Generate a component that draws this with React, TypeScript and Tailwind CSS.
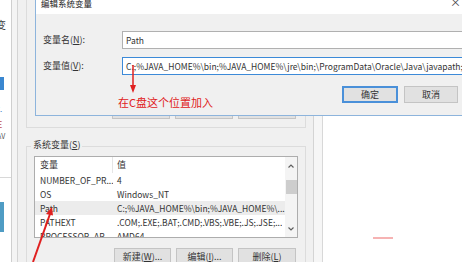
import React from "react";

const rows = [
  { name: "NUMBER_OF_PR...", value: "4" },
  { name: "OS", value: "Windows_NT" },
  { name: "Path", value: "C:;%JAVA_HOME%\\bin;%JAVA_HOME%\\...", sel: true },
  { name: "PATHEXT", value: ".COM;.EXE;.BAT;.CMD;.VBS;.VBE;.JS;.JSE;..." },
  { name: "PROCESSOR_AR...", value: "AMD64" },
];

function Btn({ children, primary }: { children: React.ReactNode; primary?: boolean }) {
  return (
    <div
      className={
        "w-full h-full flex items-center justify-center bg-[#e1e1e1] text-[9px] text-[#333] " +
        (primary ? "border-2 border-[#4a90d9]" : "border border-[#c4c4c4]")
      }
    >
      {children}
    </div>
  );
}

export default function App() {
  return (
    <div className="relative w-[462px] h-[262px] overflow-hidden bg-white font-['Noto_Sans_CJK_SC','Noto_Sans',sans-serif] text-[#333]">
      {/* far-left window fragment */}
      <div className="absolute left-0 top-0 w-[12px] h-[262px] bg-white border-r border-[#cfcfcf] flex flex-col overflow-hidden">
        <div className="mt-[19px] -ml-[4px] text-[10px] leading-[12px] text-[#444]">变</div>
        <div className="mt-[46px] w-[4px] h-[13px] bg-[#3a87d0]" />
        <div className="mt-[14px] -ml-[3px] text-[8px] leading-[10px] text-[#3a7bc8]">t.</div>
        <div className="mt-[6px] -ml-[3px] text-[9px] leading-[10px] text-[#c0504d]">E</div>
        <div className="mt-[2px] -ml-[3px] text-[7px] leading-[8px] text-[#555]">AV</div>
        <div className="mt-[37px] h-px w-full bg-[#d8d8d8]" />
        <div className="mt-[24px] w-[4px] h-[30px] bg-[#4f9cc4]" />
      </div>
      <div className="absolute left-[12px] top-0 w-[5px] h-[262px] bg-[#f4f4f4]" />

      {/* environment variables window (behind) */}
      <div className="absolute left-[17px] top-0 w-[297px] h-[262px] bg-[#f0f0f0] border-l border-r border-[#d4d4d4] flex flex-col">
        {/* user variables group (cut off) */}
        <div className="ml-[8px] w-[280px] h-[128px] shrink-0 border-x border-b border-[#dcdcdc] flex items-end justify-end gap-[5px] pr-[9px] pb-[8px]">
          <div className="w-[58px] h-[17px] bg-[#e1e1e1] border border-[#c4c4c4]" />
          <div className="w-[58px] h-[17px] bg-[#e1e1e1] border border-[#c4c4c4]" />
          <div className="w-[58px] h-[17px] bg-[#e1e1e1] border border-[#c4c4c4]" />
        </div>
        {/* system variables group */}
        <div className="mt-[18px] ml-[8px] w-[280px] flex-1 border-x border-t border-[#dcdcdc] flex flex-col">
          <div className="-mt-[8px] ml-[4px] self-start bg-[#f0f0f0] px-[2px] text-[9px] leading-[12px]">
            系统变量(<span className="underline">S</span>)
          </div>
          <div className="mt-[5px] ml-[7px] w-[264px] h-[82px] shrink-0 bg-white border border-[#adadad] flex overflow-hidden">
            <div className="flex-1 min-w-0 flex flex-col text-[8.5px]">
              <div className="h-[16px] shrink-0 flex items-center">
                <div className="w-[78px] shrink-0 h-full flex items-center pl-[5px] border-r border-[#e5e5e5] text-[9px]">变量</div>
                <div className="pl-[4px] text-[9px]">值</div>
              </div>
              {rows.map((r) => (
                <div
                  key={r.name}
                  className={"h-[14px] shrink-0 flex items-center " + (r.sel ? "bg-[#ececec]" : "")}
                >
                  <div className="w-[78px] shrink-0 pl-[5px] whitespace-nowrap overflow-hidden">{r.name}</div>
                  <div className="pl-[4px] whitespace-nowrap overflow-hidden">{r.value}</div>
                </div>
              ))}
            </div>
            <div className="w-[12px] shrink-0 bg-[#f4f4f4] flex flex-col items-center">
              <svg width="8" height="16" viewBox="0 0 8 16" className="mt-[1px]">
                <path d="M1.5 9.5 L4 7 L6.5 9.5" stroke="#606060" strokeWidth="1.2" fill="none" />
              </svg>
              <div className="mt-[6px] w-[11px] h-[14px] bg-[#cdcdcd]" />
              <div className="flex-1" />
              <svg width="8" height="16" viewBox="0 0 8 16">
                <path d="M1.5 6.5 L4 9 L6.5 6.5" stroke="#606060" strokeWidth="1.2" fill="none" />
              </svg>
            </div>
          </div>
          <div className="mt-[10px] flex justify-end gap-[5px] pr-[9px]">
            <div className="w-[57px] h-[18px]"><Btn>新建(<span className="underline">W</span>)...</Btn></div>
            <div className="w-[57px] h-[18px]"><Btn>编辑(<span className="underline">I</span>)...</Btn></div>
            <div className="w-[58px] h-[18px]"><Btn>删除(<span className="underline">L</span>)</Btn></div>
          </div>
        </div>
      </div>
      <div className="absolute left-[314px] top-0 w-[9px] h-[262px] bg-[#f6f6f6] border-r border-[#d8d8d8]" />

      {/* edit system variable dialog */}
      <div className="absolute left-[35px] top-0 w-[440px] h-[116px] bg-[#f0f0f0] border-l border-b border-[#8db4dc] flex flex-col">
        <div className="h-[14px] shrink-0 bg-white flex items-start justify-between pr-[14px]">
          <div className="-mt-[2px] ml-[5px] text-[8.5px] leading-[10px] text-[#222]">编辑系统变量</div>
          <div className="-mt-[4px] text-[11px] leading-[12px] text-[#444]">×</div>
        </div>
        <div className="mt-[17px] flex items-center h-[18px]">
          <div className="w-[86px] shrink-0 pl-[7px] text-[9px]">
            变量名(<span className="underline">N</span>):
          </div>
          <div className="flex-1 h-full bg-white border-y border-l border-[#b0b0b0] flex items-center pl-[3px] text-[8.5px]">
            Path
          </div>
        </div>
        <div className="mt-[8px] flex items-center h-[18px]">
          <div className="w-[86px] shrink-0 pl-[7px] text-[9px]">
            变量值(<span className="underline">V</span>):
          </div>
          <div className="flex-1 min-w-0 h-full bg-white border-y border-l border-[#3c8ad8] flex items-center pl-[3px] text-[8.5px] whitespace-nowrap overflow-hidden">
            C:;%JAVA_HOME%\bin;%JAVA_HOME%\jre\bin;\ProgramData\Oracle\Java\javapath;%SystemRoot%
          </div>
        </div>
        <div className="mt-[11px] flex justify-end gap-[6px] pr-[17px]">
          <div className="w-[56px] h-[17px]"><Btn primary>确定</Btn></div>
          <div className="w-[54px] h-[17px]"><Btn>取消</Btn></div>
        </div>
      </div>

      {/* annotations */}
      <svg className="absolute left-0 top-0" width="462" height="262" viewBox="0 0 462 262">
        <line x1="133" y1="65" x2="133" y2="88" stroke="#e02020" strokeWidth="1.5" />
        <path d="M130 85 L136 85 L133 93 Z" fill="#e02020" />
        <line x1="33" y1="262" x2="50" y2="214" stroke="#e02020" strokeWidth="2" />
        <path d="M46 214 L53 215.5 L52 207 Z" fill="#e02020" />
        <line x1="373" y1="238" x2="393" y2="238" stroke="#f08080" strokeWidth="1.2" />
      </svg>
      <div className="absolute left-[118px] top-[95px] text-[11px] leading-[15px] text-[#e02020] whitespace-nowrap">
        在C盘这个位置加入
      </div>
    </div>
  );
}
